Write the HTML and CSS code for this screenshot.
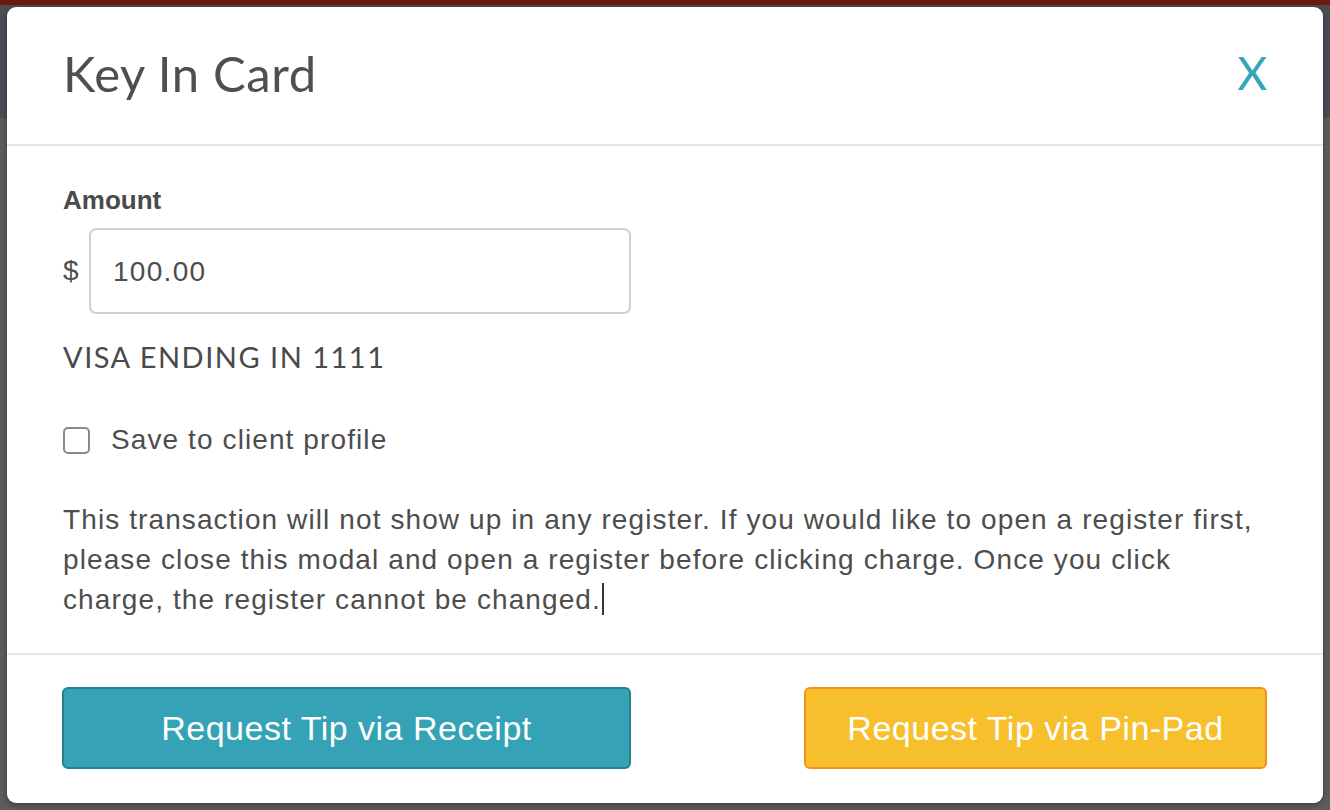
FILE: index.html
```html
<!DOCTYPE html>
<html lang="en">
<head>
<meta charset="utf-8">
<title>Key In Card</title>
<link rel="stylesheet" href="styles.css">
</head>
<body>
<div class="backdrop">
  <div class="modal">
    <div class="modal-header">
      <h1 class="modal-title">Key In Card</h1>
      <span class="close">X</span>
    </div>
    <div class="modal-body">
      <label class="field-label">Amount</label>
      <div class="amount-row">
        <span class="currency">$</span>
        <div class="amount-input">100.00</div>
      </div>
      <div class="card-info">VISA ENDING IN 1111</div>
      <div class="check-row">
        <span class="checkbox"></span>
        <span class="check-label">Save to client profile</span>
      </div>
      <p class="notice">This transaction will not show up in any register. If you would like to open a register first, please close this modal and open a register before clicking charge. Once you click charge, the register cannot be changed.<span class="caret"></span></p>
    </div>
    <div class="modal-footer">
      <button class="btn btn-teal">Request Tip via Receipt</button>
      <button class="btn btn-yellow">Request Tip via Pin-Pad</button>
    </div>
  </div>
</div>
</body>
</html>
```

FILE: styles.css
```css
html, body {
  margin: 0;
  padding: 0;
}

body {
  width: 1330px;
  height: 810px;
  overflow: hidden;
  background: linear-gradient(to bottom, #6a1a0f 0, #6a1a0f 5px, #4a4d55 5px, #4a4d55 118px, #5d5d5d 118px, #5d5d5d 100%);
  font-family: "Liberation Sans", Arial, sans-serif;
  color: #4d4d4d;
}

.backdrop {
  padding-top: 7px;
}

.modal {
  width: 1316px;
  height: 796px;
  margin: 0 auto;
  background: #fff;
  border-radius: 9px;
  box-shadow: 0 2px 6px rgba(0, 0, 0, 0.35);
  display: flex;
  flex-direction: column;
  box-sizing: border-box;
}

.modal-header {
  height: 139px;
  padding: 0 56px 5px;
  box-sizing: border-box;
  display: flex;
  align-items: center;
  justify-content: space-between;
  border-bottom: 2px solid #e6e6e6;
  flex: none;
}

.modal-title {
  margin: 0;
  font-family: Lato, sans-serif;
  font-weight: 400;
  font-size: 49px;
  letter-spacing: 0.6px;
  color: #4f4f4f;
  line-height: 1;
}

.close {
  font-family: Lato, sans-serif;
  font-weight: 400;
  font-size: 46px;
  line-height: 1;
  color: #35a5b9;
}

.modal-body {
  padding: 36px 56px 0;
  flex: 1;
  border-bottom: 2px solid #e6e6e6;
}

.field-label {
  display: block;
  font-weight: 700;
  font-size: 26px;
  line-height: 36px;
  color: #4a4a4a;
}

.amount-row {
  display: flex;
  align-items: center;
  margin-top: 10px;
}

.currency {
  font-size: 28px;
  width: 26px;
}

.amount-input {
  width: 542px;
  height: 86px;
  box-sizing: border-box;
  border: 2px solid #cfcfcf;
  border-radius: 7px;
  padding: 2px 0 0 22px;
  font-size: 28px;
  letter-spacing: 1.3px;
  display: flex;
  align-items: center;
}

.card-info {
  margin-top: 27px;
  font-family: Lato, sans-serif;
  font-size: 29px;
  letter-spacing: 1.5px;
  line-height: 32px;
  color: #4a4a4a;
}

.check-row {
  display: flex;
  align-items: center;
  margin-top: 53px;
  height: 28px;
}

.checkbox {
  width: 27px;
  height: 27px;
  box-sizing: border-box;
  border: 2px solid #8a8a8a;
  border-radius: 5px;
  margin-right: 21px;
}

.check-label {
  font-size: 28px;
  letter-spacing: 1.1px;
}

.notice {
  margin: 46px 0 0;
  font-size: 28px;
  letter-spacing: 1.1px;
  line-height: 40px;
}

.caret {
  display: inline-block;
  width: 2px;
  height: 32px;
  background: #333;
  vertical-align: -6px;
  margin-left: 1px;
}

.modal-footer {
  flex: none;
  height: 148px;
  padding: 32px 56px 0 55px;
  box-sizing: border-box;
  display: flex;
  justify-content: space-between;
  align-items: flex-start;
}

.btn {
  height: 82px;
  border-radius: 6px;
  border: 2px solid;
  font-family: "Liberation Sans", Arial, sans-serif;
  font-size: 34px;
  letter-spacing: 0.5px;
  color: #fff;
  padding: 0;
  box-sizing: border-box;
}

.btn-teal {
  width: 569px;
  background: #35a2b5;
  border-color: #267f8e;
}

.btn-yellow {
  width: 463px;
  background: #f6bf2b;
  border-color: #f0911d;
}
```
